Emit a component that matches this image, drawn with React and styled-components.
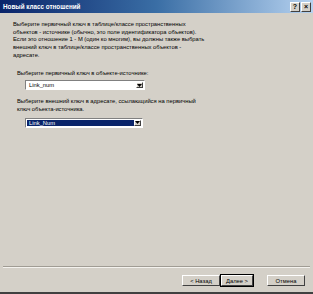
import styled, { createGlobalStyle } from "styled-components";

const GlobalStyle = createGlobalStyle`
  html, body {
    margin: 0;
    padding: 0;
    background: #d4d0c8;
  }
`;

const Window = styled.div`
  width: 313px;
  height: 294px;
  box-sizing: border-box;
  background: #d4d0c8;
  border-bottom: 2px solid #404040;
  display: flex;
  flex-direction: column;
  font-family: "Liberation Sans", Arial, sans-serif;
  font-size: 5.8px;
  color: #000;
  overflow: hidden;
`;

const TitleBar = styled.div`
  height: 13px;
  flex: none;
  background: linear-gradient(to right, #0a246a 0%, #3a6ea5 50%, #b6d2f0 100%);
  display: flex;
  align-items: center;
  justify-content: space-between;
  padding: 0 2px 0 3px;
`;

const Title = styled.span`
  color: #fff;
  font-weight: bold;
  font-size: 6.3px;
`;

const TitleButtons = styled.div`
  display: flex;
  gap: 1px;
`;

const CaptionButton = styled.div`
  width: 8px;
  height: 8px;
  background: #d4d0c8;
  border: 1px solid;
  border-color: #fff #404040 #404040 #fff;
  display: flex;
  align-items: center;
  justify-content: center;
  font-size: 7px;
  font-weight: bold;
  line-height: 1;
  color: #000;
`;

const Body = styled.div`
  flex: 1;
  padding: 8px 10px 0 13px;
  display: flex;
  flex-direction: column;
`;

const Paragraph = styled.p`
  margin: 0;
  line-height: 7.7px;
  white-space: pre-line;
`;

const Field = styled.div`
  margin-top: ${(p) => p.top}px;
  padding-left: 4px;
  display: flex;
  flex-direction: column;
`;

const Label = styled.div`
  line-height: 7.7px;
  white-space: pre-line;
`;

const Combo = styled.div`
  margin-top: ${(p) => p.gap}px;
  margin-left: 8px;
  width: ${(p) => p.width}px;
  height: 10px;
  box-sizing: border-box;
  background: #fff;
  border: 1px solid;
  border-color: #808080 #fff #fff #808080;
  display: flex;
  padding: 1px;
`;

const ComboValue = styled.div`
  flex: 1;
  display: flex;
  align-items: center;
  padding-left: 2px;
  background: ${(p) => (p.selected ? "#0a246a" : "#fff")};
  color: ${(p) => (p.selected ? "#fff" : "#000")};
`;

const ComboArrow = styled.div`
  width: 7px;
  box-sizing: border-box;
  background: #d4d0c8;
  border: 1px solid;
  border-color: #fff #404040 #404040 #fff;
  display: flex;
  align-items: center;
  justify-content: center;
`;

const Footer = styled.div`
  flex: none;
  display: flex;
  flex-direction: column;
`;

const Separator = styled.div`
  margin: 0 3px;
  height: 0;
  border-top: 1px solid #a09c94;
  border-bottom: 1px solid #f4f2ee;
`;

const ButtonRow = styled.div`
  display: flex;
  justify-content: flex-end;
  align-items: center;
  padding: 7px 8px 6px 0;
`;

const Button = styled.div`
  width: ${(p) => p.width || 38}px;
  height: 11px;
  box-sizing: border-box;
  margin-left: ${(p) => p.gap || 0}px;
  background: #d4d0c8;
  border: 1px solid;
  border-color: #fff #404040 #404040 #fff;
  outline: ${(p) => (p.primary ? "1px solid #000" : "none")};
  display: flex;
  align-items: center;
  justify-content: center;
`;

const Arrow = () => (
  <svg width="5" height="3" viewBox="0 0 5 3">
    <path d="M0 0h5L2.5 3z" fill="#000" />
  </svg>
);

export default function App() {
  return (
    <>
      <GlobalStyle />
      <Window>
        <TitleBar>
          <Title>Новый класс отношений</Title>
          <TitleButtons>
            <CaptionButton>?</CaptionButton>
            <CaptionButton>×</CaptionButton>
          </TitleButtons>
        </TitleBar>
        <Body>
          <Paragraph>
            {"Выберите первичный ключ в таблице/классе пространственных\nобъектов - источнике (обычно, это поле идентификатора объектов).\nЕсли это отношение 1 - М (один ко многим), вы должны также выбрать\nвнешний ключ в таблице/классе пространственных объектов -\nадресате."}
          </Paragraph>
          <Field top={10}>
            <Label>Выберите первичный ключ в объекте-источнике:</Label>
            <Combo gap={3} width={120}>
              <ComboValue>Link_num</ComboValue>
              <ComboArrow>
                <Arrow />
              </ComboArrow>
            </Combo>
          </Field>
          <Field top={8}>
            <Label>
              {"Выберите внешний ключ в адресате, ссылающийся на первичный\nключ объекта-источника."}
            </Label>
            <Combo gap={4} width={118}>
              <ComboValue selected>Link_Num</ComboValue>
              <ComboArrow>
                <Arrow />
              </ComboArrow>
            </Combo>
          </Field>
        </Body>
        <Footer>
          <Separator />
          <ButtonRow>
            <Button>&lt; Назад</Button>
            <Button primary width={32} gap={1}>
              Далее &gt;
            </Button>
            <Button gap={14}>Отмена</Button>
          </ButtonRow>
        </Footer>
      </Window>
    </>
  );
}
